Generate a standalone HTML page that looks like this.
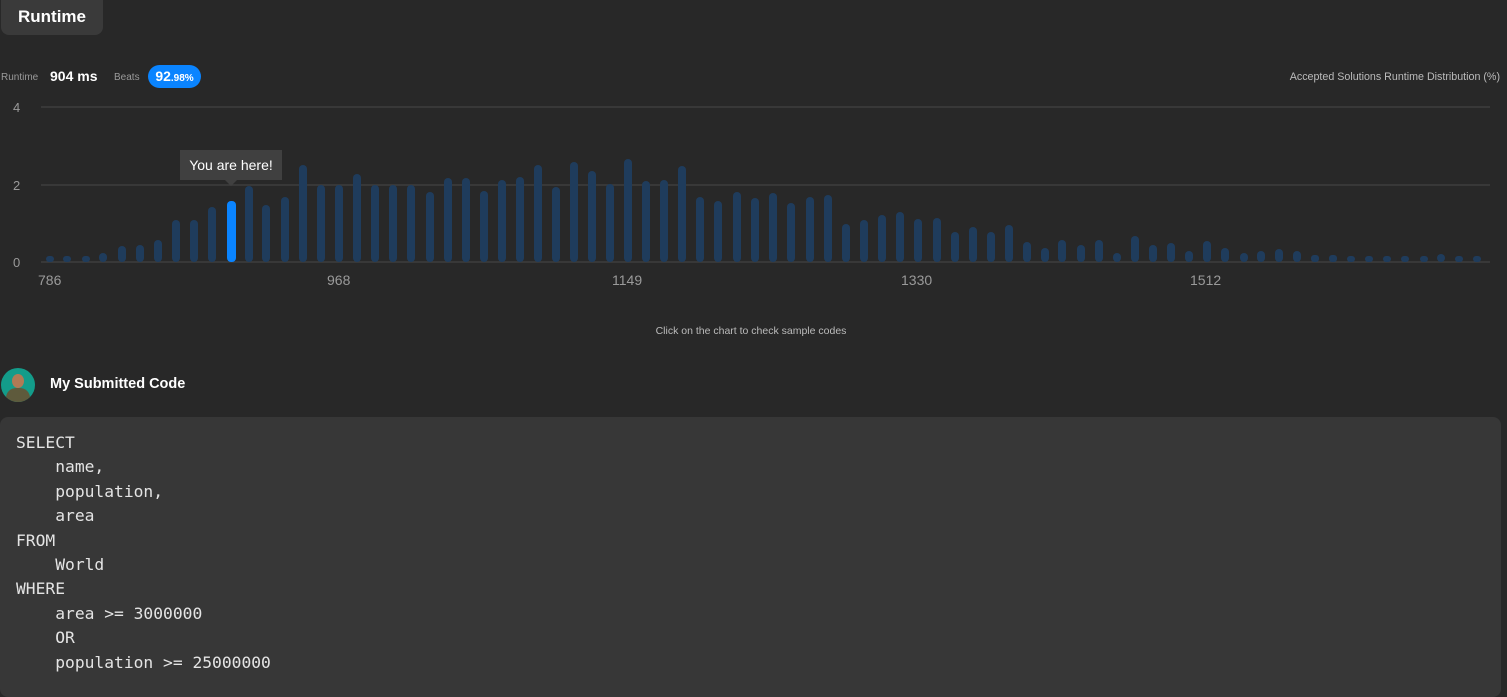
<!DOCTYPE html>
<html><head><meta charset="utf-8"><style>
body{margin:0;width:1507px;height:691px;background:#282828;font-family:"Liberation Sans",sans-serif;overflow:hidden;position:relative;color:#eee}
.tab{position:absolute;left:1px;top:0;width:102px;height:35px;background:#3a3a3a;border-radius:0 0 8px 8px;color:#fff;font-weight:bold;font-size:17px;line-height:34px;text-align:center}
.sm{position:absolute;font-size:10px;color:#9a9a9a}
.code{position:absolute;left:0;top:417px;width:1501px;height:280px;background:#373737;border-radius:8px}
pre{margin:0;position:absolute;left:16px;top:431px;font-family:"DejaVu Sans Mono","Liberation Mono",monospace;font-size:16.3px;line-height:24.4px;color:#e4e4e4}
</style></head><body>
<div class="tab">Runtime</div>
<div class="sm" style="left:1px;top:72px">Runtime</div>
<div style="position:absolute;left:50px;top:68px;font-size:14px;font-weight:bold;color:#fff">904 ms</div>
<div class="sm" style="left:114px;top:72px">Beats</div>
<div style="position:absolute;left:148px;top:65px;width:53px;height:23px;border-radius:12px;background:#0a84ff;color:#fff;font-weight:bold;font-size:14px;line-height:23px;text-align:center">92<span style="font-size:10px">.98%</span></div>
<div class="sm" style="right:7px;top:71px;color:#bbb;font-size:10.7px">Accepted Solutions Runtime Distribution (%)</div>
<svg style="position:absolute;left:0;top:0" width="1507" height="350">
<g fill="#9a9a9a" font-size="13" font-family="Liberation Sans,sans-serif">
<text x="13" y="112">4</text><text x="13" y="190">2</text><text x="13" y="267">0</text>
<text x="38" y="285" font-size="14">786</text><text x="327" y="285" font-size="14">968</text><text x="612" y="285" font-size="14">1149</text><text x="901" y="285" font-size="14">1330</text><text x="1190" y="285" font-size="14">1512</text>
</g>
<g stroke="#3e3e3e" stroke-width="1.5"><line x1="41" y1="107" x2="1490" y2="107"/><line x1="41" y1="185" x2="1490" y2="185"/><line x1="41" y1="262" x2="1490" y2="262"/></g>
<g fill="#1f3c5c">
<rect x="46" y="256" width="8" height="6" rx="3"/><rect x="63" y="256" width="8" height="6" rx="3"/><rect x="82" y="256" width="8" height="6" rx="3"/><rect x="99" y="253" width="8" height="9" rx="4"/><rect x="118" y="246" width="8" height="16" rx="4"/><rect x="136" y="245" width="8" height="17" rx="4"/><rect x="154" y="240" width="8" height="22" rx="4"/><rect x="172" y="220" width="8" height="42" rx="4"/><rect x="190" y="220" width="8" height="42" rx="4"/><rect x="208" y="207" width="8" height="55" rx="4"/>
<rect x="245" y="186" width="8" height="76" rx="4"/><rect x="262" y="205" width="8" height="57" rx="4"/><rect x="281" y="197" width="8" height="65" rx="4"/><rect x="299" y="165" width="8" height="97" rx="4"/><rect x="317" y="185" width="8" height="77" rx="4"/><rect x="335" y="185" width="8" height="77" rx="4"/><rect x="353" y="174" width="8" height="88" rx="4"/><rect x="371" y="185" width="8" height="77" rx="4"/><rect x="389" y="185" width="8" height="77" rx="4"/><rect x="407" y="185" width="8" height="77" rx="4"/>
<rect x="426" y="192" width="8" height="70" rx="4"/><rect x="444" y="178" width="8" height="84" rx="4"/><rect x="462" y="178" width="8" height="84" rx="4"/><rect x="480" y="191" width="8" height="71" rx="4"/><rect x="498" y="180" width="8" height="82" rx="4"/><rect x="516" y="177" width="8" height="85" rx="4"/><rect x="534" y="165" width="8" height="97" rx="4"/><rect x="552" y="187" width="8" height="75" rx="4"/><rect x="570" y="162" width="8" height="100" rx="4"/><rect x="588" y="171" width="8" height="91" rx="4"/>
<rect x="606" y="184" width="8" height="78" rx="4"/><rect x="624" y="159" width="8" height="103" rx="4"/><rect x="642" y="181" width="8" height="81" rx="4"/><rect x="660" y="180" width="8" height="82" rx="4"/><rect x="678" y="166" width="8" height="96" rx="4"/><rect x="696" y="197" width="8" height="65" rx="4"/><rect x="714" y="201" width="8" height="61" rx="4"/><rect x="733" y="192" width="8" height="70" rx="4"/><rect x="751" y="198" width="8" height="64" rx="4"/><rect x="769" y="193" width="8" height="69" rx="4"/>
<rect x="787" y="203" width="8" height="59" rx="4"/><rect x="806" y="197" width="8" height="65" rx="4"/><rect x="824" y="195" width="8" height="67" rx="4"/><rect x="842" y="224" width="8" height="38" rx="4"/><rect x="860" y="220" width="8" height="42" rx="4"/><rect x="878" y="215" width="8" height="47" rx="4"/><rect x="896" y="212" width="8" height="50" rx="4"/><rect x="914" y="219" width="8" height="43" rx="4"/><rect x="933" y="218" width="8" height="44" rx="4"/><rect x="951" y="232" width="8" height="30" rx="4"/>
<rect x="969" y="227" width="8" height="35" rx="4"/><rect x="987" y="232" width="8" height="30" rx="4"/><rect x="1005" y="225" width="8" height="37" rx="4"/><rect x="1023" y="242" width="8" height="20" rx="4"/><rect x="1041" y="248" width="8" height="14" rx="4"/><rect x="1058" y="240" width="8" height="22" rx="4"/><rect x="1077" y="245" width="8" height="17" rx="4"/><rect x="1095" y="240" width="8" height="22" rx="4"/><rect x="1113" y="253" width="8" height="9" rx="4"/><rect x="1131" y="236" width="8" height="26" rx="4"/>
<rect x="1149" y="245" width="8" height="17" rx="4"/><rect x="1167" y="243" width="8" height="19" rx="4"/><rect x="1185" y="251" width="8" height="11" rx="4"/><rect x="1203" y="241" width="8" height="21" rx="4"/><rect x="1221" y="248" width="8" height="14" rx="4"/><rect x="1240" y="253" width="8" height="9" rx="4"/><rect x="1257" y="251" width="8" height="11" rx="4"/><rect x="1275" y="249" width="8" height="13" rx="4"/><rect x="1293" y="251" width="8" height="11" rx="4"/><rect x="1311" y="255" width="8" height="7" rx="3"/>
<rect x="1329" y="255" width="8" height="7" rx="3"/><rect x="1347" y="256" width="8" height="6" rx="3"/><rect x="1365" y="256" width="8" height="6" rx="3"/><rect x="1383" y="256" width="8" height="6" rx="3"/><rect x="1401" y="256" width="8" height="6" rx="3"/><rect x="1420" y="256" width="8" height="6" rx="3"/><rect x="1437" y="254" width="8" height="8" rx="4"/><rect x="1455" y="256" width="8" height="6" rx="3"/><rect x="1473" y="256" width="8" height="6" rx="3"/>
</g>
<rect x="227" y="201" width="9" height="61" rx="4" fill="#0a84ff"/>
<rect x="180" y="150" width="102" height="30" fill="#404040"/>
<polygon points="225,180 237,180 231,186" fill="#404040"/>
<text x="231" y="170" text-anchor="middle" fill="#fff" font-size="14" font-family="Liberation Sans,sans-serif">You are here!</text>
<text x="751" y="334" text-anchor="middle" fill="#bbb" font-size="10.5" font-family="Liberation Sans,sans-serif">Click on the chart to check sample codes</text>
</svg>
<div style="position:absolute;left:1px;top:368px;width:34px;height:34px;border-radius:50%;background:#139c8a;overflow:hidden">
<div style="position:absolute;left:11px;top:6px;width:12px;height:14px;border-radius:50%;background:#b07a55"></div>
<div style="position:absolute;left:5px;top:20px;width:24px;height:18px;border-radius:10px 10px 0 0;background:#5e5a3c"></div>
</div>
<div style="position:absolute;left:50px;top:376px;font-size:14.5px;font-weight:bold;color:#fff">My Submitted Code</div>
<div class="code"></div>
<pre>SELECT
    name,
    population,
    area
FROM
    World
WHERE
    area &gt;= 3000000
    OR
    population &gt;= 25000000</pre>
</body></html>
